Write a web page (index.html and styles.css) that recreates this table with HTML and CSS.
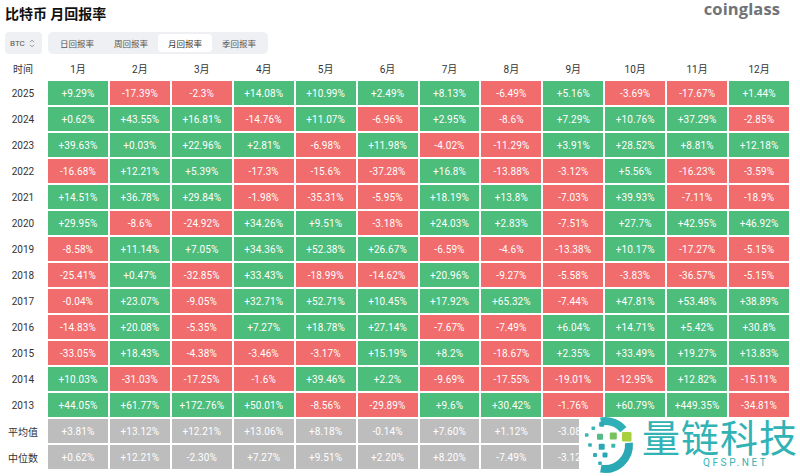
FILE: index.html
```html
<!DOCTYPE html>
<html lang="zh">
<head>
<meta charset="utf-8">
<title>比特币 月回报率</title>
<link rel="stylesheet" href="styles.css">
</head>
<body>
<div class="top">
  <div class="title">比特币 月回报率</div>
  <div class="brand">coinglass</div>
</div>
<div class="toolbar">
  <div class="sel">BTC <svg class="updown" width="6" height="9" viewBox="0 0 6 9"><path d="M1 3.2 L3 1.2 L5 3.2 M1 5.8 L3 7.8 L5 5.8" fill="none" stroke="#888" stroke-width="0.9"/></svg></div>
  <div class="tabs">
    <div class="tab">日回报率</div>
    <div class="tab">周回报率</div>
    <div class="tab active">月回报率</div>
    <div class="tab">季回报率</div>
  </div>
</div>
<div class="grid">
  <div class="lbl">时间</div><div class="lbl">1月</div><div class="lbl">2月</div><div class="lbl">3月</div><div class="lbl">4月</div><div class="lbl">5月</div><div class="lbl">6月</div><div class="lbl">7月</div><div class="lbl">8月</div><div class="lbl">9月</div><div class="lbl">10月</div><div class="lbl">11月</div><div class="lbl">12月</div>

  <div class="lbl">2025</div><div class="c g">+9.29%</div><div class="c r">-17.39%</div><div class="c r">-2.3%</div><div class="c g">+14.08%</div><div class="c g">+10.99%</div><div class="c g">+2.49%</div><div class="c g">+8.13%</div><div class="c r">-6.49%</div><div class="c g">+5.16%</div><div class="c r">-3.69%</div><div class="c r">-17.67%</div><div class="c g">+1.44%</div>

  <div class="lbl">2024</div><div class="c g">+0.62%</div><div class="c g">+43.55%</div><div class="c g">+16.81%</div><div class="c r">-14.76%</div><div class="c g">+11.07%</div><div class="c r">-6.96%</div><div class="c g">+2.95%</div><div class="c r">-8.6%</div><div class="c g">+7.29%</div><div class="c g">+10.76%</div><div class="c g">+37.29%</div><div class="c r">-2.85%</div>

  <div class="lbl">2023</div><div class="c g">+39.63%</div><div class="c g">+0.03%</div><div class="c g">+22.96%</div><div class="c g">+2.81%</div><div class="c r">-6.98%</div><div class="c g">+11.98%</div><div class="c r">-4.02%</div><div class="c r">-11.29%</div><div class="c g">+3.91%</div><div class="c g">+28.52%</div><div class="c g">+8.81%</div><div class="c g">+12.18%</div>

  <div class="lbl">2022</div><div class="c r">-16.68%</div><div class="c g">+12.21%</div><div class="c g">+5.39%</div><div class="c r">-17.3%</div><div class="c r">-15.6%</div><div class="c r">-37.28%</div><div class="c g">+16.8%</div><div class="c r">-13.88%</div><div class="c r">-3.12%</div><div class="c g">+5.56%</div><div class="c r">-16.23%</div><div class="c r">-3.59%</div>

  <div class="lbl">2021</div><div class="c g">+14.51%</div><div class="c g">+36.78%</div><div class="c g">+29.84%</div><div class="c r">-1.98%</div><div class="c r">-35.31%</div><div class="c r">-5.95%</div><div class="c g">+18.19%</div><div class="c g">+13.8%</div><div class="c r">-7.03%</div><div class="c g">+39.93%</div><div class="c r">-7.11%</div><div class="c r">-18.9%</div>

  <div class="lbl">2020</div><div class="c g">+29.95%</div><div class="c r">-8.6%</div><div class="c r">-24.92%</div><div class="c g">+34.26%</div><div class="c g">+9.51%</div><div class="c r">-3.18%</div><div class="c g">+24.03%</div><div class="c g">+2.83%</div><div class="c r">-7.51%</div><div class="c g">+27.7%</div><div class="c g">+42.95%</div><div class="c g">+46.92%</div>

  <div class="lbl">2019</div><div class="c r">-8.58%</div><div class="c g">+11.14%</div><div class="c g">+7.05%</div><div class="c g">+34.36%</div><div class="c g">+52.38%</div><div class="c g">+26.67%</div><div class="c r">-6.59%</div><div class="c r">-4.6%</div><div class="c r">-13.38%</div><div class="c g">+10.17%</div><div class="c r">-17.27%</div><div class="c r">-5.15%</div>

  <div class="lbl">2018</div><div class="c r">-25.41%</div><div class="c g">+0.47%</div><div class="c r">-32.85%</div><div class="c g">+33.43%</div><div class="c r">-18.99%</div><div class="c r">-14.62%</div><div class="c g">+20.96%</div><div class="c r">-9.27%</div><div class="c r">-5.58%</div><div class="c r">-3.83%</div><div class="c r">-36.57%</div><div class="c r">-5.15%</div>

  <div class="lbl">2017</div><div class="c r">-0.04%</div><div class="c g">+23.07%</div><div class="c r">-9.05%</div><div class="c g">+32.71%</div><div class="c g">+52.71%</div><div class="c g">+10.45%</div><div class="c g">+17.92%</div><div class="c g">+65.32%</div><div class="c r">-7.44%</div><div class="c g">+47.81%</div><div class="c g">+53.48%</div><div class="c g">+38.89%</div>

  <div class="lbl">2016</div><div class="c r">-14.83%</div><div class="c g">+20.08%</div><div class="c r">-5.35%</div><div class="c g">+7.27%</div><div class="c g">+18.78%</div><div class="c g">+27.14%</div><div class="c r">-7.67%</div><div class="c r">-7.49%</div><div class="c g">+6.04%</div><div class="c g">+14.71%</div><div class="c g">+5.42%</div><div class="c g">+30.8%</div>

  <div class="lbl">2015</div><div class="c r">-33.05%</div><div class="c g">+18.43%</div><div class="c r">-4.38%</div><div class="c r">-3.46%</div><div class="c r">-3.17%</div><div class="c g">+15.19%</div><div class="c g">+8.2%</div><div class="c r">-18.67%</div><div class="c g">+2.35%</div><div class="c g">+33.49%</div><div class="c g">+19.27%</div><div class="c g">+13.83%</div>

  <div class="lbl">2014</div><div class="c g">+10.03%</div><div class="c r">-31.03%</div><div class="c r">-17.25%</div><div class="c r">-1.6%</div><div class="c g">+39.46%</div><div class="c g">+2.2%</div><div class="c r">-9.69%</div><div class="c r">-17.55%</div><div class="c r">-19.01%</div><div class="c r">-12.95%</div><div class="c g">+12.82%</div><div class="c r">-15.11%</div>

  <div class="lbl">2013</div><div class="c g">+44.05%</div><div class="c g">+61.77%</div><div class="c g">+172.76%</div><div class="c g">+50.01%</div><div class="c r">-8.56%</div><div class="c r">-29.89%</div><div class="c g">+9.6%</div><div class="c g">+30.42%</div><div class="c r">-1.76%</div><div class="c g">+60.79%</div><div class="c g">+449.35%</div><div class="c r">-34.81%</div>

  <div class="lbl">平均值</div><div class="c n">+3.81%</div><div class="c n">+13.12%</div><div class="c n">+12.21%</div><div class="c n">+13.06%</div><div class="c n">+8.18%</div><div class="c n">-0.14%</div><div class="c n">+7.60%</div><div class="c n">+1.12%</div><div class="c n">-3.08%</div><div class="c n"></div><div class="c n"></div><div class="c n"></div>

  <div class="lbl">中位数</div><div class="c n">+0.62%</div><div class="c n">+12.21%</div><div class="c n">-2.30%</div><div class="c n">+7.27%</div><div class="c n">+9.51%</div><div class="c n">+2.20%</div><div class="c n">+8.20%</div><div class="c n">-7.49%</div><div class="c n">-3.12%</div><div class="c n"></div><div class="c n"></div><div class="c n"></div>
</div>

<div class="wm">
  <svg class="wm-logo" width="62" height="59" viewBox="0 1 62 59">
    <path d="M21.8 5.4 A24 24 0 0 1 44.4 13.6" fill="none" stroke="#2fb0b8" stroke-width="8"/>
    <path d="M49.9 26.9 A24 24 0 0 1 21.8 52.6" fill="none" stroke="#2aa9b4" stroke-width="8"/>
    <rect x="20.2" y="5.8" width="5" height="5" rx="1" fill="#2fa8b6"/>
    <rect x="12.5" y="10.5" width="3.6" height="3.6" rx="0.8" fill="#3ab5b2"/>
    <rect x="5.9" y="17.2" width="3.6" height="3.6" rx="0.8" fill="#3ab5b2"/>
    <rect x="18" y="17.7" width="6" height="6" rx="1" fill="#52bb86"/>
    <rect x="30.8" y="16.5" width="7" height="7" rx="1" fill="#76c25f"/>
    <rect x="43" y="16" width="9.5" height="9.5" rx="1.2" fill="#a8cf3c"/>
    <rect x="9.2" y="27.2" width="3.6" height="3.6" rx="0.8" fill="#33b0b4"/>
    <rect x="19.7" y="27.7" width="6" height="6" rx="1" fill="#2aa9b5"/>
    <rect x="32.3" y="27.7" width="4" height="4" rx="0.8" fill="#3ab6ae"/>
    <rect x="14" y="37" width="4" height="4" rx="0.8" fill="#31aeb6"/>
    <rect x="23.5" y="36.5" width="5" height="5" rx="1" fill="#2aa7b5"/>
    <rect x="19.2" y="45.5" width="3.6" height="3.6" rx="0.8" fill="#32aeb6"/>
  </svg>
  <div class="wm-text">
    <div class="wm-name">量链科技</div>
    <div class="wm-url">QFSP.NET</div>
  </div>
</div>
</body>
</html>
```
FILE: styles.css
```css
* { box-sizing: border-box; }
body {
  margin: 0;
  width: 800px;
  height: 476px;
  overflow: hidden;
  position: relative;
  background: #ffffff;
  font-family: Roboto, "Noto Sans CJK SC", sans-serif;
  color: #333;
}
.top {
  display: flex;
  justify-content: space-between;
  align-items: flex-start;
  height: 24px;
  padding: 0 20px 0 5px;
}
.title {
  font-family: "Noto Sans CJK SC", sans-serif;
  font-size: 14px;
  font-weight: 700;
  line-height: 20px;
  margin-top: 3px;
  color: #111;
}
.brand {
  font-family: "Open Sans", sans-serif;
  font-weight: 700;
  font-size: 16.5px;
  line-height: 16px;
  margin-top: 1px;
  color: #6f7378;
  letter-spacing: 0.1px;
}
.toolbar {
  display: flex;
  gap: 6px;
  margin-top: 8px;
  padding-left: 5px;
  height: 22px;
}
.sel {
  width: 37px;
  height: 22px;
  background: #eef0f3;
  border-radius: 4px;
  display: flex;
  align-items: center;
  gap: 4px;
  padding-left: 5px;
  font-size: 8px;
  color: #555;
}
.tabs {
  display: flex;
  background: #eef0f3;
  border-radius: 5px;
  padding: 2px;
}
.tab {
  width: 54px;
  height: 18px;
  display: flex;
  align-items: center;
  justify-content: center;
  font-family: "Noto Sans CJK SC", sans-serif;
  font-size: 8.5px;
  color: #555;
}
.tab.active {
  background: #fff;
  border-radius: 4px;
  color: #333;
}
.grid {
  margin-top: 3px;
  width: 789px;
  display: grid;
  grid-template-columns: 46px repeat(12, 1fr);
  grid-template-rows: 22px;
  grid-auto-rows: 24px;
  gap: 2px;
}
.lbl {
  display: flex;
  align-items: center;
  justify-content: center;
  font-family: Roboto, "Noto Sans CJK SC", sans-serif;
  font-size: 10px;
  color: #333;
}
.c {
  display: flex;
  align-items: center;
  justify-content: center;
  font-size: 10px;
  color: #fff;
  letter-spacing: 0.1px;
}
.c.g { background: #4dbd7c; }
.c.r { background: #f16c6c; }
.c.n { background: #bdbdbd; }
.wm {
  position: absolute;
  left: 579px;
  top: 417px;
  width: 221px;
  height: 59px;
  background: #fff;
  display: flex;
}
.wm-logo { flex: none; }
.wm-text {
  margin-left: 1px;
  display: flex;
  flex-direction: column;
}
.wm-name {
  font-family: "Noto Sans CJK SC", sans-serif;
  font-size: 38px;
  line-height: 36px;
  letter-spacing: 1px;
  color: #31b2b5;
  margin-top: 1px;
}
.wm-url {
  font-family: Roboto, sans-serif;
  font-size: 10px;
  line-height: 12px;
  letter-spacing: 2.6px;
  color: #35b3b3;
  padding-left: 61px;
  margin-top: 3px;
}
```
